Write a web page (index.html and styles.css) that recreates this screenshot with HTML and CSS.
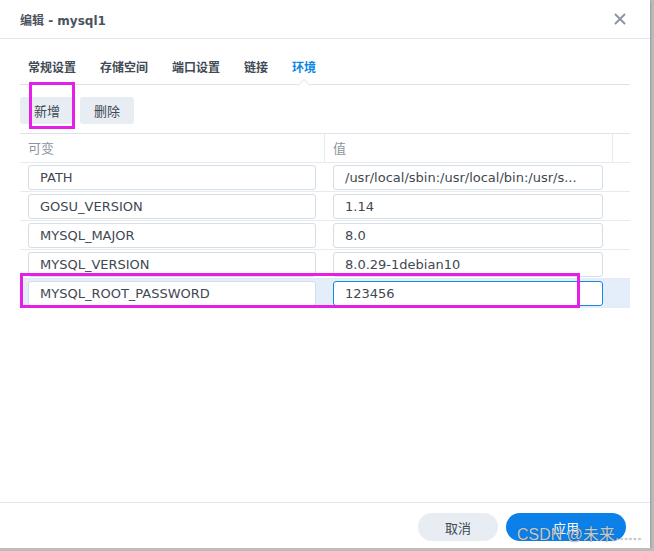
FILE: index.html
```html
<!DOCTYPE html>
<html lang="zh-CN">
<head>
    <meta charset="UTF-8">
    <title>编辑 - mysql1</title>
    <link rel="stylesheet" href="styles.css">
</head>
<body>
    <div class="dialog">
        <!-- 标题栏 -->
        <div class="header">
            <span class="title">编辑 - mysql1</span>
            <svg class="close" width="12" height="12" viewBox="0 0 12 12">
                <path d="M1.5 1.5 L10.5 10.5 M10.5 1.5 L1.5 10.5" stroke="#8d959d" stroke-width="2" stroke-linecap="round"/>
            </svg>
        </div>

        <div class="content">
            <div class="tabs">
                <div class="tab">常规设置</div>
                <div class="tab">存储空间</div>
                <div class="tab">端口设置</div>
                <div class="tab">链接</div>
                <div class="tab active">环境</div>
            </div>

            <div class="toolbar">
                <button class="btn">新增</button>
                <button class="btn">删除</button>
            </div>

            <div class="table">
                <div class="row head">
                    <div class="cell">可变</div>
                    <div class="cell">值</div>
                    <div class="cell"></div>
                </div>
                <div class="row">
                    <div class="cell"><div class="field">PATH</div></div>
                    <div class="cell"><div class="field">/usr/local/sbin:/usr/local/bin:/usr/s...</div></div>
                </div>
                <div class="row">
                    <div class="cell"><div class="field">GOSU_VERSION</div></div>
                    <div class="cell"><div class="field">1.14</div></div>
                </div>
                <div class="row">
                    <div class="cell"><div class="field">MYSQL_MAJOR</div></div>
                    <div class="cell"><div class="field">8.0</div></div>
                </div>
                <div class="row">
                    <div class="cell"><div class="field">MYSQL_VERSION</div></div>
                    <div class="cell"><div class="field">8.0.29-1debian10</div></div>
                </div>
                <div class="row selected">
                    <div class="cell"><div class="field">MYSQL_ROOT_PASSWORD</div></div>
                    <div class="cell"><div class="field focus">123456</div></div>
                </div>
            </div>
        </div>

        <div class="footer">
            <button class="pill">取消</button>
            <button class="pill primary">应用</button>
        </div>

        <!-- 标注框 -->
        <div class="mark mark-add"></div>
        <div class="mark mark-row"></div>
        <div class="watermark">CSDN @未来......</div>
    </div>
</body>
</html>
```

FILE: styles.css
```css
body {
    margin: 0;
    background-color: #bcbcbc;
    font-family: "DejaVu Sans", "Noto Sans CJK SC", sans-serif;
    color: #3f4852;
}
.dialog {
    position: relative;
    width: 650px;
    height: 548px;
    background-color: white;
    display: flex;
    flex-direction: column;
    box-shadow: 0 1px 3px rgba(0, 0, 0, 0.35);
}
.header {
    height: 38px;
    border-bottom: 1px solid #e3e8ee;
    padding: 0 24px 0 20px;
    display: flex;
    align-items: center;
    justify-content: space-between;
}
.title {
    font-size: 12px;
    font-weight: bold;
    color: #4b545e;
}
.content {
    flex: 1;
    padding: 0 20px;
}
.tabs {
    height: 45px;
    border-bottom: 1px solid #dbe2ea;
    display: flex;
    margin-bottom: 12px;
}
.tab {
    position: relative;
    padding: 19px 12px 0;
    line-height: 17px;
    font-size: 12px;
    font-weight: bold;
    font-family: "Noto Sans CJK SC", sans-serif;
    color: #414a54;
}
.tab:first-child {
    margin-left: -4px;
}
.tab.active {
    color: #0a86e6;
}
.tab.active::before,
.tab.active::after {
    content: "";
    position: absolute;
    left: 50%;
    bottom: -1px;
    border: 6px solid transparent;
    border-top: none;
    margin-left: -6px;
}
.tab.active::before {
    border-bottom-color: #dbe2ea;
}
.tab.active::after {
    border-width: 5px;
    border-top: none;
    margin-left: -5px;
    border-bottom-color: white;
    bottom: -1px;
}
.toolbar {
    display: flex;
    gap: 6px;
    margin-bottom: 9px;
}
.btn {
    height: 27px;
    padding: 0 14px;
    border: none;
    border-radius: 3px;
    background-color: #e8edf3;
    font-size: 13px;
    font-family: "Noto Sans CJK SC", sans-serif;
    color: #3f4852;
}
.table {
    border-top: 1px solid #dde4ec;
}
.row {
    display: grid;
    grid-template-columns: 305px 288px 1fr;
    height: 28px;
    border-bottom: 1px solid #e6ebf0;
}
.row.selected {
    background-color: #e4eefa;
}
.row.head .cell {
    border-right: 1px solid #e6ebf0;
    padding-left: 8px;
    line-height: 28px;
    font-size: 13px;
    font-family: "Noto Sans CJK SC", sans-serif;
    color: #8c959e;
}
.row.head .cell:last-child {
    border-right: none;
}
.row .cell {
    padding-left: 8px;
    display: flex;
    align-items: center;
}
.field {
    box-sizing: border-box;
    width: 288px;
    height: 25px;
    padding: 0 11px;
    border: 1px solid #d5dde6;
    border-radius: 3px;
    background-color: white;
    font-size: 13px;
    line-height: 23px;
    white-space: nowrap;
    overflow: hidden;
}
.cell + .cell .field {
    width: 270px;
}
.field.focus {
    border-color: #1a86e4;
}
.footer {
    height: 46px;
    border-top: 1px solid #e3e8ee;
    display: flex;
    justify-content: flex-end;
    align-items: flex-start;
    gap: 8px;
    padding: 10px 24px 0 0;
    box-sizing: border-box;
}
.pill {
    height: 28px;
    width: 80px;
    border: none;
    border-radius: 14px;
    background-color: #e8edf3;
    font-size: 13px;
    font-family: "Noto Sans CJK SC", sans-serif;
    color: #3f4852;
}
.pill.primary {
    width: 120px;
    background-color: #0a80e8;
    color: white;
}
.mark {
    position: absolute;
    border: 3px solid #e51fe6;
    box-sizing: border-box;
}
.mark-add {
    left: 29px;
    top: 82px;
    width: 46px;
    height: 47px;
}
.mark-row {
    left: 20px;
    top: 273px;
    width: 560px;
    height: 35px;
}
.watermark {
    position: absolute;
    left: 517px;
    top: 521px;
    font-size: 16px;
    font-family: "Liberation Sans", "Noto Sans CJK SC", sans-serif;
    color: rgba(215, 218, 222, 0.9);
    text-shadow: 0 0 1px rgba(60, 60, 60, 0.8);
    white-space: nowrap;
}
```
